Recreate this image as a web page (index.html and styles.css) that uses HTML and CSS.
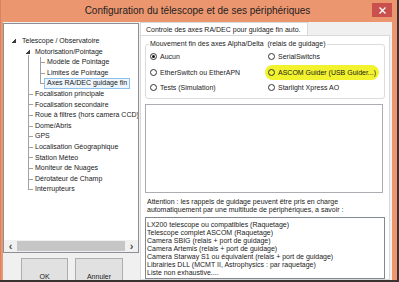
FILE: index.html
```html
<!DOCTYPE html>
<html lang="fr">
<head>
    <meta charset="UTF-8">
    <title>Configuration du télescope</title>
    <link rel="stylesheet" href="styles.css">
</head>
<body>
    <div class="fenetre">
        <div class="titre-barre">
            <span></span>
            <span class="titre">Configuration du télescope et de ses périphériques</span>
            <span class="fermer">
                <svg width="7" height="7" viewBox="0 0 7 7"><path d="M0.5 0.5 L6.5 6.5 M6.5 0.5 L0.5 6.5" stroke="#fff" stroke-width="1.3"/></svg>
            </span>
        </div>
        <div class="client">
            <div class="colonne-gauche">
                <div class="arbre">
                    <div class="arbre-liste">
                        <div class="noeud racine"><span class="deplie"></span>Telescope / Observatoire</div>
                        <div class="noeud n1 premier"><span class="deplie"></span>Motorisation/Pointage</div>
                        <div class="noeud n2">Modèle de Pointage</div>
                        <div class="noeud n2">Limites de Pointage</div>
                        <div class="noeud n2 dernier"><span class="selection">Axes RA/DEC guidage fin</span></div>
                        <div class="noeud n1">Focalisation principale</div>
                        <div class="noeud n1">Focalisation secondaire</div>
                        <div class="noeud n1">Roue à filtres (hors camera CCD)</div>
                        <div class="noeud n1">Dome/Abris</div>
                        <div class="noeud n1">GPS</div>
                        <div class="noeud n1">Localisation Géographique</div>
                        <div class="noeud n1">Station Méteo</div>
                        <div class="noeud n1">Moniteur de Nuages</div>
                        <div class="noeud n1">Dérotateur de Champ</div>
                        <div class="noeud n1 fin">Interrupteurs</div>
                    </div>
                    <div class="defilement">
                        <span class="fleche">&lsaquo;</span>
                        <span class="curseur"></span>
                        <span class="fleche">&rsaquo;</span>
                    </div>
                </div>
                <div class="boutons">
                    <button class="bouton bouton-ok">OK</button>
                    <button class="bouton bouton-annuler">Annuler</button>
                </div>
            </div>

            <div class="onglets">
                <div class="onglet-barre">
                    <div class="onglet">Controle des axes RA/DEC pour guidage fin auto.</div>
                </div>
                <div class="onglet-page">
                    <div class="groupe">
                        <span class="legende">Mouvement fin des axes Alpha/Delta&nbsp; (relais de guidage)</span>
                        <div class="radios">
                            <label class="radio"><span class="rond coche"></span>Aucun</label>
                            <label class="radio"><span class="rond"></span>SerialSwitchs</label>
                            <label class="radio"><span class="rond"></span>EtherSwitch ou EtherAPN</label>
                            <label class="radio surligne"><span class="rond"></span>ASCOM Guider (USB Guider...)</label>
                            <label class="radio"><span class="rond"></span>Tests (Simulation)</label>
                            <label class="radio"><span class="rond"></span>Starlight Xpress AO</label>
                        </div>
                    </div>
                    <div class="memo"></div>
                    <p class="attention">Attention : les rappels de guidage peuvent être pris en charge<br>automatiquement par une multitude de périphériques, a savoir :</p>
                    <div class="liste">
                        <div>LX200 telescope ou compatibles (Raquetage)</div>
                        <div>Telescope complet ASCOM (Raquetage)</div>
                        <div>Camera SBIG (relais + port de guidage)</div>
                        <div>Camera Artemis (relais + port de guidage)</div>
                        <div>Camera Starway S1 ou équivalent (relais + port de guidage)</div>
                        <div>Librairies DLL (MCMT II, Astrophysics : par raquetage)</div>
                        <div>Liste non exhaustive....</div>
                    </div>
                </div>
            </div>
        </div>
    </div>
</body>
</html>
```

FILE: styles.css
```css
body {
    margin: 0;
    width: 399px;
    height: 282px;
    overflow: hidden;
    background-color: #3a3330;
    font-family: "Liberation Sans", Arial, sans-serif;
    font-size: 7px;
    color: #1a1a1a;
}
.fenetre {
    width: 397px;
    height: 280px;
    background-color: #ec9670;
    border-left: 1px solid #d98460;
    box-sizing: border-box;
    padding: 0 5px 0 2px;
    display: flex;
    flex-direction: column;
}
.titre-barre {
    height: 22px;
    flex: none;
    display: grid;
    grid-template-columns: 1fr auto 1fr;
    align-items: start;
}
.titre {
    font-size: 10px;
    line-height: 22px;
    color: #222;
    white-space: nowrap;
}
.fermer {
    justify-self: end;
    margin-top: 3px;
    width: 20px;
    height: 14px;
    background-color: #c9504c;
    display: flex;
    align-items: center;
    justify-content: center;
}
.client {
    flex: 1;
    min-height: 0;
    background-color: #f0f0f0;
    display: flex;
    gap: 1px;
    overflow: hidden;
}

/* arbre de gauche */
.colonne-gauche {
    width: 136px;
    flex: none;
    display: flex;
    flex-direction: column;
}
.arbre {
    flex: none;
    margin-top: 1px;
    border: 1px solid #8c9096;
    background-color: #fff;
    overflow: hidden;
}
.arbre-liste {
    height: 216px;
    box-sizing: border-box;
    padding-top: 12px;
}
.noeud {
    height: 10.6px;
    line-height: 10.6px;
    white-space: nowrap;
    display: flex;
    align-items: center;
    background-repeat: no-repeat;
}
.deplie {
    width: 4px;
    height: 4px;
    flex: none;
    background: linear-gradient(to bottom right, transparent 50%, #3a3a3a 50%);
}
.racine {
    padding-left: 8px;
}
.racine .deplie {
    margin-right: 6px;
}
.n1 {
    padding-left: 31px;
    background-image: linear-gradient(#a0a0a0, #a0a0a0), linear-gradient(#a0a0a0, #a0a0a0);
    background-position: 24px 0, 24px 50%;
    background-size: 1px 100%, 5px 1px;
}
.n1.premier {
    padding-left: 22px;
    background-image: linear-gradient(#a0a0a0, #a0a0a0);
    background-position: 24px 100%;
    background-size: 1px 50%;
}
.n1.premier .deplie {
    margin-right: 5px;
    box-shadow: 0 0 0 1px #fff;
}
.n1.fin {
    background-size: 1px 50%, 5px 1px;
}
.n2 {
    padding-left: 43px;
    background-image: linear-gradient(#a0a0a0, #a0a0a0), linear-gradient(#a0a0a0, #a0a0a0), linear-gradient(#a0a0a0, #a0a0a0);
    background-position: 24px 0, 36px 0, 36px 50%;
    background-size: 1px 100%, 1px 100%, 5px 1px;
}
.n2.dernier {
    padding-left: 40px;
    background-size: 1px 100%, 1px 50%, 5px 1px;
}
.selection {
    border: 1px solid #8fc0ea;
    background-color: #eef6fd;
    padding: 0 2px;
    line-height: 8.6px;
}
.defilement {
    height: 12px;
    background-color: #f0f0f0;
    display: flex;
    align-items: center;
    color: #4a4a4a;
    font-size: 11px;
    font-weight: bold;
}
.fleche {
    width: 13px;
    flex: none;
    text-align: center;
    line-height: 12px;
}
.curseur {
    flex: 1;
    height: 10px;
    background-color: #c6c6c6;
}
.boutons {
    flex: none;
    display: flex;
    gap: 7px;
    margin: 5px 0 0 18px;
}
.bouton {
    flex: none;
    height: 36px;
    border: 1px solid #adadad;
    background-color: #e1e1e1;
    font-family: inherit;
    font-size: 7px;
    color: #1a1a1a;
    padding: 0;
}
.bouton-ok {
    width: 47px;
}
.bouton-annuler {
    width: 48px;
}

/* onglet de droite */
.onglets {
    flex: 1;
    display: flex;
    flex-direction: column;
    margin-right: 2px;
}
.onglet-barre {
    height: 13px;
    flex: none;
    display: flex;
}
.onglet {
    width: 168px;
    box-sizing: border-box;
    border: 1px solid #d9d9d9;
    border-bottom: none;
    background-color: #fff;
    padding-left: 5px;
    line-height: 13px;
    white-space: nowrap;
}
.onglet-page {
    flex: 1;
    border: 1px solid #d9d9d9;
    background-color: #fff;
    padding: 0 4px 0 4px;
}
.groupe {
    margin-top: 8px;
    border: 1px solid #dcdcdc;
    border-radius: 3px;
    padding: 0 0 2px 4px;
}
.legende {
    display: table;
    margin: -5px 0 0 -1px;
    padding: 0 1px;
    background-color: #fff;
    line-height: 8px;
    white-space: nowrap;
}
.radios {
    margin-top: 1px;
    display: grid;
    grid-template-columns: 118px 1fr;
    grid-auto-rows: 15.5px;
    align-items: center;
}
.radio {
    display: flex;
    align-items: center;
    white-space: nowrap;
    justify-self: start;
}
.rond {
    width: 7px;
    height: 7px;
    box-sizing: border-box;
    border: 1px solid #333;
    border-radius: 50%;
    background-color: #fff;
    margin-right: 3px;
    display: flex;
    align-items: center;
    justify-content: center;
}
.rond.coche::after {
    content: "";
    width: 3px;
    height: 3px;
    border-radius: 50%;
    background-color: #111;
}
.surligne {
    background-color: #f2f22e;
    border-radius: 8px;
    margin-left: -3px;
    padding: 4px 3px 4px 3px;
}
.surligne .rond {
    background-color: transparent;
}
.memo {
    margin: 5px 2px 0 0;
    height: 89px;
    box-sizing: border-box;
    border: 1px solid #abadb3;
}
.attention {
    margin: 5px 0 0;
    padding-left: 2px;
    line-height: 8px;
    white-space: nowrap;
}
.liste {
    margin-top: 3px;
    border: 1px solid #828790;
    padding: 3.5px 1px 0.5px;
    line-height: 8px;
    white-space: nowrap;
}
```
